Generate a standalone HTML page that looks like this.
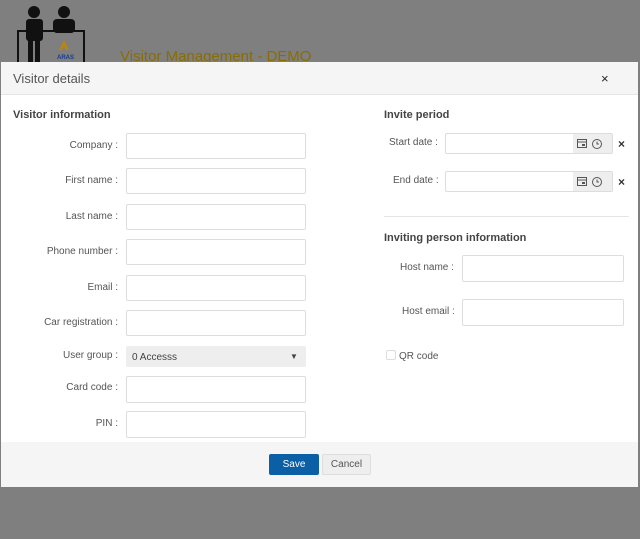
<!DOCTYPE html><html><head><style>
body{margin:0;width:640px;height:539px;background:#7f7f7f;font-family:"Liberation Sans",sans-serif;position:relative;overflow:hidden}
.a{position:absolute}
.m{left:1px;top:62px;width:637px;height:425px;background:#fff}
.lab{font-size:10px;color:#555;text-align:right;width:110px}
.in{background:#fff;border:1px solid #ddd;border-radius:2px;box-sizing:border-box}
h3{margin:0;font-size:11px;color:#444;font-weight:bold}
</style></head><body>
<svg class="a" style="left:16px;top:3px" width="72" height="60"><g fill="#111"><circle cx="18" cy="9" r="6"/><rect x="10" y="16" width="17" height="22" rx="3"/><rect x="12" y="36" width="5" height="24"/><rect x="19" y="36" width="5" height="24"/><circle cx="48" cy="9" r="6"/><rect x="37" y="16" width="22" height="14" rx="4"/></g><rect x="2" y="28" width="66" height="40" fill="none" stroke="#111" stroke-width="2"/><path d="M48 37l5 10h-3l-2-4-2 4h-3z" fill="#b8860b"/><text x="41" y="56" font-size="6" fill="#1a3a8a" font-weight="bold">ARAS</text></svg>
<div class="a" style="left:120px;top:48px;font-size:15px;color:#8a6d00">Visitor Management - DEMO</div>
<div class="a m"></div>
<div class="a" style="left:1px;top:62px;width:637px;height:32px;background:#f5f5f5;border-bottom:1px solid #e5e5e5"></div>
<div class="a" style="left:13px;top:71px;font-size:13px;color:#555">Visitor details</div>
<div class="a" style="left:601px;top:71px;font-size:13px;color:#222">×</div>
<h3 class="a" style="left:13px;top:109px">Visitor information</h3>
<div class="a lab" style="left:8px;top:140px">Company :</div><div class="a in" style="left:126px;top:133px;width:180px;height:26px"></div>
<div class="a lab" style="left:8px;top:175px">First name :</div><div class="a in" style="left:126px;top:168px;width:180px;height:26px"></div>
<div class="a lab" style="left:8px;top:211px">Last name :</div><div class="a in" style="left:126px;top:204px;width:180px;height:26px"></div>
<div class="a lab" style="left:8px;top:246px">Phone number :</div><div class="a in" style="left:126px;top:239px;width:180px;height:26px"></div>
<div class="a lab" style="left:8px;top:282px">Email :</div><div class="a in" style="left:126px;top:275px;width:180px;height:26px"></div>
<div class="a lab" style="left:8px;top:317px">Car registration :</div><div class="a in" style="left:126px;top:310px;width:180px;height:26px"></div>
<div class="a lab" style="left:8px;top:350px">User group :</div><div class="a" style="left:126px;top:346px;width:180px;height:21px;background:#eee;border-radius:2px"></div>
<div class="a" style="left:132px;top:352px;font-size:10px;color:#444">0 Accesss</div><div class="a" style="left:290px;top:352px;font-size:8px;color:#444">▼</div>
<div class="a lab" style="left:8px;top:382px">Card code :</div><div class="a in" style="left:126px;top:376px;width:180px;height:27px"></div>
<div class="a lab" style="left:8px;top:418px">PIN :</div><div class="a in" style="left:126px;top:411px;width:180px;height:27px"></div>
<h3 class="a" style="left:384px;top:109px">Invite period</h3>
<div class="a" style="left:389px;top:137px;font-size:10px;color:#555">Start date :</div>
<div class="a in" style="left:445px;top:133px;width:168px;height:21px"></div><div class="a" style="left:573px;top:134px;width:39px;height:19px;background:#eee"></div>
<div class="a" style="left:393px;top:175px;font-size:10px;color:#555">End date :</div>
<div class="a in" style="left:445px;top:171px;width:168px;height:21px"></div><div class="a" style="left:573px;top:172px;width:39px;height:19px;background:#eee"></div>
<svg class="a" style="left:576px;top:137px" width="34" height="52"><g fill="none" stroke="#555" stroke-width="1"><rect x="1.5" y="2.5" width="9" height="8"/><line x1="1.5" y1="5" x2="10.5" y2="5"/><circle cx="21" cy="7" r="4.5"/><path d="M21 4.5V7h2"/><rect x="1.5" y="40.5" width="9" height="8"/><line x1="1.5" y1="43" x2="10.5" y2="43"/><circle cx="21" cy="45" r="4.5"/><path d="M21 42.5V45h2"/></g><rect x="6" y="7" width="3" height="2" fill="#555"/><rect x="6" y="45" width="3" height="2" fill="#555"/></svg>
<div class="a" style="left:618px;top:137px;font-size:12px;color:#333;font-weight:bold">×</div>
<div class="a" style="left:618px;top:175px;font-size:12px;color:#333;font-weight:bold">×</div>
<div class="a" style="left:384px;top:216px;width:245px;height:1px;background:#e5e5e5"></div>
<h3 class="a" style="left:384px;top:232px">Inviting person information</h3>
<div class="a" style="left:400px;top:262px;font-size:10px;color:#555">Host name :</div><div class="a in" style="left:462px;top:255px;width:162px;height:27px"></div>
<div class="a" style="left:402px;top:306px;font-size:10px;color:#555">Host email :</div><div class="a in" style="left:462px;top:299px;width:162px;height:27px"></div>
<div class="a in" style="left:386px;top:350px;width:10px;height:10px"></div><div class="a" style="left:399px;top:351px;font-size:10px;color:#555">QR code</div>
<div class="a" style="left:1px;top:442px;width:637px;height:45px;background:#f5f5f5"></div>
<div class="a" style="left:269px;top:454px;width:50px;height:21px;background:#0b5fa5;border-radius:2px;color:#fff;font-size:10px;text-align:center;line-height:22px">Save</div>
<div class="a" style="left:322px;top:454px;width:49px;height:21px;background:#eee;border:1px solid #ddd;box-sizing:border-box;border-radius:2px;color:#555;font-size:10px;text-align:center;line-height:20px">Cancel</div>
</body></html>
